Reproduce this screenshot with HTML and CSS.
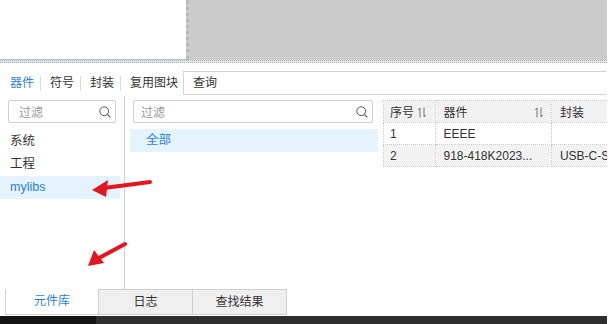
FILE: index.html
```html
<html>
<head>
<title>元件库</title>
<link rel="stylesheet" href="styles.css">
</head>
<body>
<div class="app">
  <div class="top">
    <div class="top-left"></div>
    <div class="top-right"></div>
  </div>
  <div class="splitter"></div>

  <div class="lib-tabs">
    <span class="lib-tab active">器件</span>
    <span class="lib-tab">符号</span>
    <span class="lib-tab">封装</span>
    <span class="lib-tab last">复用图块</span>
    <div class="query">查询</div>
  </div>

  <div class="lib-body">
    <div class="side">
      <div class="filter">
        <span>过滤</span>
        <svg width="12" height="12" viewBox="0 0 12 12"><circle cx="5.2" cy="5.2" r="4.4" fill="none" stroke="#555" stroke-width="1"/><line x1="8.4" y1="8.4" x2="11.3" y2="11.3" stroke="#555" stroke-width="1.1"/></svg>
      </div>
      <div class="tree">
        <div class="row">系统</div>
        <div class="row">工程</div>
        <div class="row sel">mylibs</div>
      </div>
    </div>

    <div class="cats">
      <div class="filter wide">
        <span>过滤</span>
        <svg width="12" height="12" viewBox="0 0 12 12"><circle cx="5.2" cy="5.2" r="4.4" fill="none" stroke="#555" stroke-width="1"/><line x1="8.4" y1="8.4" x2="11.3" y2="11.3" stroke="#555" stroke-width="1.1"/></svg>
      </div>
      <div class="row sel all">全部</div>
    </div>

    <div class="parts-wrap">
      <table class="parts">
        <tr class="head">
          <td class="c1">序号<svg class="sort" width="8" height="11" viewBox="0 0 8 11"><path d="M2 10.5V1L0.3 3M6 0.5V10L7.7 8" fill="none" stroke="#666" stroke-width="0.9"/></svg></td>
          <td class="c2">器件<svg class="sort right" width="8" height="11" viewBox="0 0 8 11"><path d="M2 10.5V1L0.3 3M6 0.5V10L7.7 8" fill="none" stroke="#666" stroke-width="0.9"/></svg></td>
          <td class="c3">封装</td>
        </tr>
        <tr>
          <td>1</td>
          <td>EEEE</td>
          <td></td>
        </tr>
        <tr class="alt">
          <td>2</td>
          <td>918-418K2023...</td>
          <td>USB-C-S</td>
        </tr>
      </table>
    </div>
  </div>

  <div class="bottom-tabs">
    <span class="btab active">元件库</span>
    <span class="btab">日志</span>
    <span class="btab">查找结果</span>
  </div>
  <div class="status"><span class="status-left"></span></div>
</div>

<!-- red annotation arrows drawn over the screenshot -->
<svg class="arrows" width="613" height="324" viewBox="0 0 613 324">
  <path d="M150 182 L104 188" stroke="#e3161d" stroke-width="4" stroke-linecap="round"/>
  <path d="M92 190 L108 180 L106 197 Z" fill="#e3161d"/>
  <path d="M125 244 L99 258" stroke="#e3161d" stroke-width="4" stroke-linecap="round"/>
  <path d="M88 266 L94 250 L104 263 Z" fill="#e3161d"/>
</svg>
</body>
</html>
```

FILE: styles.css
```css
body { margin:0; background:#fff; color:#333; font-family:"Liberation Sans", "Noto Sans CJK SC", sans-serif; font-size:12px; }
.app { width:607px; height:324px; display:flex; flex-direction:column; }

/* upper editor area */
.top { height:60px; display:flex; }
.top-left { width:186px; border-bottom:1px solid #a8c2d8; background:#fff; }
.top-right { flex:1; background:#cbcbcb; border-left:3px dotted #b9b9b9; }
.splitter { height:1px; border-top:1px dotted #b0b0b0; border-bottom:1px dotted #b0b0b0; background:#e6e6e6; }

/* library tabs */
.lib-tabs { height:33px; box-sizing:border-box; padding-top:8px; display:flex; align-items:flex-start; }
.lib-tab { height:24px; line-height:24px; padding:0 7px 0 8px; position:relative; }
.lib-tab:first-child { padding-left:10px; }
.lib-tab + .lib-tab { padding-left:9px; }
.lib-tab.last { padding-right:5px; }
.lib-tab.active { color:#2b7fe0; }
.lib-tab::after { content:""; position:absolute; right:0; top:5px; height:15px; border-right:1px solid #dcdcdc; }
.lib-tab.last::after { display:none; }
.query { flex:1; height:24px; box-sizing:border-box; border:1px solid #d4d4d4; border-right:none; padding-left:9px; line-height:22px; }

/* library body */
.lib-body { height:193px; display:flex; }
.side { width:124px; border-right:1px solid #cfcfcf; }
.filter { margin:4px 0 0 8px; width:108px; height:23px; box-sizing:border-box; border:1px solid #cfcfcf; border-radius:2px; display:flex; align-items:center; justify-content:space-between; padding:0 4px 0 10px; color:#999; }
.filter.wide { margin-left:3px; width:240px; padding-left:7px; }
.tree { margin:7px 4px 0 0; }
.row { height:23px; line-height:23px; padding-left:10px; font-size:12.5px; }
.row.sel { background:#e4f3fd; color:#2b7fe0; }
.cats { width:248px; margin-left:5px; }
.row.all { margin-top:6px; padding-left:16px; }

/* parts table */
.parts-wrap { flex:1; margin:4px 0 0 5px; overflow:hidden; }
.parts { border-collapse:collapse; table-layout:fixed; width:240px; font-size:12px; color:#333; }
.parts td { height:22px; padding:0 0 0 6px; border:1px dotted #c8c8c8; white-space:nowrap; overflow:hidden; }
.parts td + td { padding-left:8px; }
.parts .head td { background:#f1f1f1; }
.parts .c1 { width:43px; }
.parts .c2 { width:104px; position:relative; }
.parts .c3 { width:60px; }
.parts tr.alt td { background:#f2f2f2; }
.sort { margin-left:4px; vertical-align:-1px; }
.sort.right { position:absolute; right:8px; top:6px; }

/* bottom tabs */
.bottom-tabs { height:27px; display:flex; padding-left:5px; }
.btab { width:94px; height:26px; box-sizing:border-box; text-align:center; line-height:24px; background:#efefef; border:1px solid #cfcfcf; border-left:none; }
.btab.active { background:#fff; color:#2b7fe0; border-top:none; border-left:1px solid #d4d4d4; }
.status { height:8px; background:#2e2e2e; display:flex; }
.status-left { width:96px; background:#141414; }

.arrows { position:absolute; left:0; top:0; pointer-events:none; }
```
